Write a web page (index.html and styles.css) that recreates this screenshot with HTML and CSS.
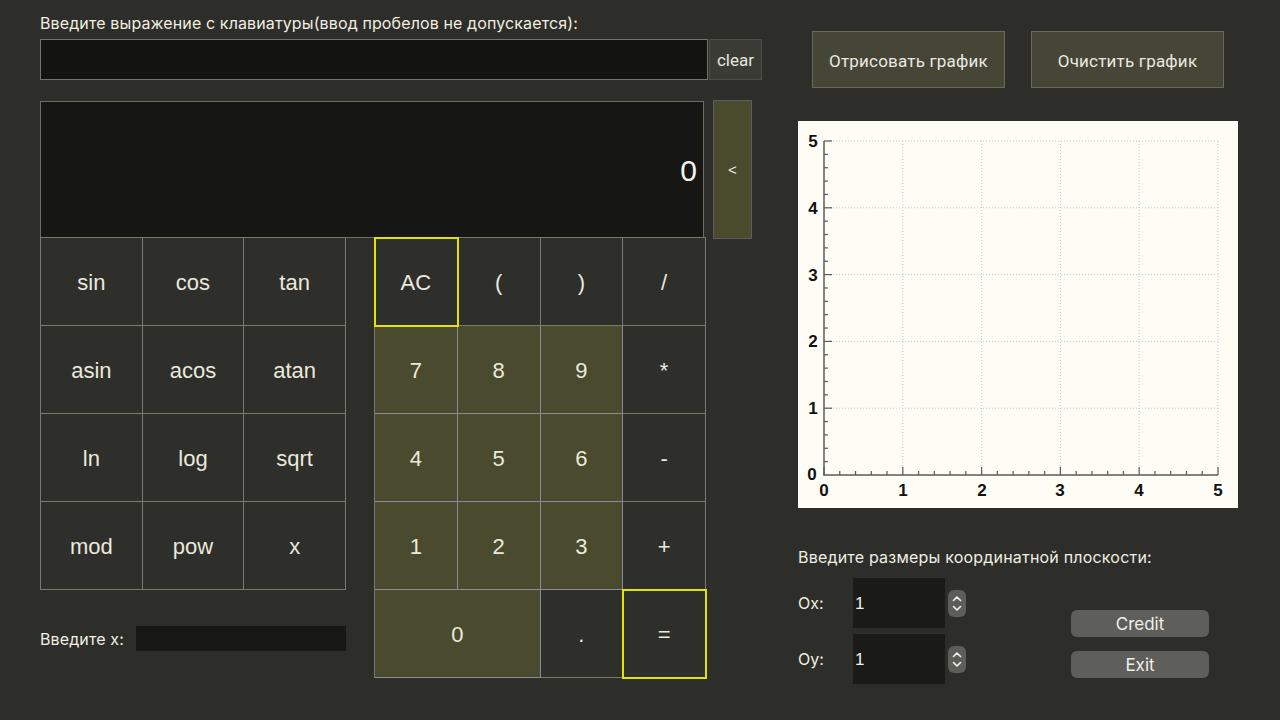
FILE: index.html
```html
<!DOCTYPE html>
<html lang="ru">
<head>
<meta charset="utf-8">
<title>Calculator</title>
<link rel="stylesheet" href="styles.css">
</head>
<body>
<div class="app">
  <div class="left">
    <div class="prompt">Введите выражение с клавиатуры(ввод пробелов не допускается):</div>
    <div class="expr-row">
      <div class="expr-input"></div>
      <button class="clear">clear</button>
    </div>
    <div class="screen-row">
      <div class="screen">0</div>
      <button class="back">&lt;</button>
    </div>
    <div class="keys">
      <div class="fn-col">
        <div class="fn-grid">
          <button class="key">sin</button>
          <button class="key">cos</button>
          <button class="key">tan</button>
          <button class="key">asin</button>
          <button class="key">acos</button>
          <button class="key">atan</button>
          <button class="key">ln</button>
          <button class="key">log</button>
          <button class="key">sqrt</button>
          <button class="key">mod</button>
          <button class="key">pow</button>
          <button class="key">x</button>
        </div>
        <div class="xrow">
          <span class="xlabel">Введите x:</span>
          <div class="xinput"></div>
        </div>
      </div>
      <div class="num-grid">
        <button class="key hl">AC</button>
        <button class="key">(</button>
        <button class="key">)</button>
        <button class="key">/</button>
        <button class="key num">7</button>
        <button class="key num">8</button>
        <button class="key num">9</button>
        <button class="key">*</button>
        <button class="key num">4</button>
        <button class="key num">5</button>
        <button class="key num">6</button>
        <button class="key">-</button>
        <button class="key num">1</button>
        <button class="key num">2</button>
        <button class="key num">3</button>
        <button class="key">+</button>
        <button class="key num wide">0</button>
        <button class="key">.</button>
        <button class="key hl">=</button>
      </div>
    </div>
  </div>

  <div class="right">
    <div class="graph-buttons">
      <button class="gbtn">Отрисовать график</button>
      <button class="gbtn">Очистить график</button>
    </div>
    <div class="graph">
      <svg width="440" height="387" viewBox="0 0 440 387" xmlns="http://www.w3.org/2000/svg">
        <g stroke="#c6c6dc" stroke-width="1" stroke-dasharray="1 2" fill="none">
          <line x1="26" y1="20" x2="420" y2="20"/>
          <line x1="26" y1="86.8" x2="420" y2="86.8"/>
          <line x1="26" y1="153.6" x2="420" y2="153.6"/>
          <line x1="26" y1="220.4" x2="420" y2="220.4"/>
          <line x1="26" y1="287.2" x2="420" y2="287.2"/>
          <line x1="104.8" y1="20" x2="104.8" y2="354"/>
          <line x1="183.6" y1="20" x2="183.6" y2="354"/>
          <line x1="262.4" y1="20" x2="262.4" y2="354"/>
          <line x1="341.2" y1="20" x2="341.2" y2="354"/>
          <line x1="420" y1="20" x2="420" y2="354"/>
        </g>
        <g stroke="#5a5a5a" stroke-width="1.5" fill="none">
          <line x1="26" y1="20" x2="26" y2="354.5"/>
          <line x1="25.5" y1="354" x2="420" y2="354"/>
        </g>
        <g stroke="#5a5a5a" stroke-width="1.2">
          <line x1="26" y1="354" x2="26" y2="346"/>
          <line x1="41.76" y1="354" x2="41.76" y2="350"/>
          <line x1="57.52" y1="354" x2="57.52" y2="350"/>
          <line x1="73.28" y1="354" x2="73.28" y2="350"/>
          <line x1="89.04" y1="354" x2="89.04" y2="350"/>
          <line x1="104.8" y1="354" x2="104.8" y2="346"/>
          <line x1="120.56" y1="354" x2="120.56" y2="350"/>
          <line x1="136.32" y1="354" x2="136.32" y2="350"/>
          <line x1="152.08" y1="354" x2="152.08" y2="350"/>
          <line x1="167.84" y1="354" x2="167.84" y2="350"/>
          <line x1="183.6" y1="354" x2="183.6" y2="346"/>
          <line x1="199.36" y1="354" x2="199.36" y2="350"/>
          <line x1="215.12" y1="354" x2="215.12" y2="350"/>
          <line x1="230.88" y1="354" x2="230.88" y2="350"/>
          <line x1="246.64" y1="354" x2="246.64" y2="350"/>
          <line x1="262.4" y1="354" x2="262.4" y2="346"/>
          <line x1="278.16" y1="354" x2="278.16" y2="350"/>
          <line x1="293.92" y1="354" x2="293.92" y2="350"/>
          <line x1="309.68" y1="354" x2="309.68" y2="350"/>
          <line x1="325.44" y1="354" x2="325.44" y2="350"/>
          <line x1="341.2" y1="354" x2="341.2" y2="346"/>
          <line x1="356.96" y1="354" x2="356.96" y2="350"/>
          <line x1="372.72" y1="354" x2="372.72" y2="350"/>
          <line x1="388.48" y1="354" x2="388.48" y2="350"/>
          <line x1="404.24" y1="354" x2="404.24" y2="350"/>
          <line x1="420" y1="354" x2="420" y2="346"/>
        </g>
        <g stroke="#5a5a5a" stroke-width="1.2">
          <line x1="26" y1="20" x2="34" y2="20"/>
          <line x1="26" y1="33.36" x2="30" y2="33.36"/>
          <line x1="26" y1="46.72" x2="30" y2="46.72"/>
          <line x1="26" y1="60.08" x2="30" y2="60.08"/>
          <line x1="26" y1="73.44" x2="30" y2="73.44"/>
          <line x1="26" y1="86.8" x2="34" y2="86.8"/>
          <line x1="26" y1="100.16" x2="30" y2="100.16"/>
          <line x1="26" y1="113.52" x2="30" y2="113.52"/>
          <line x1="26" y1="126.88" x2="30" y2="126.88"/>
          <line x1="26" y1="140.24" x2="30" y2="140.24"/>
          <line x1="26" y1="153.6" x2="34" y2="153.6"/>
          <line x1="26" y1="166.96" x2="30" y2="166.96"/>
          <line x1="26" y1="180.32" x2="30" y2="180.32"/>
          <line x1="26" y1="193.68" x2="30" y2="193.68"/>
          <line x1="26" y1="207.04" x2="30" y2="207.04"/>
          <line x1="26" y1="220.4" x2="34" y2="220.4"/>
          <line x1="26" y1="233.76" x2="30" y2="233.76"/>
          <line x1="26" y1="247.12" x2="30" y2="247.12"/>
          <line x1="26" y1="260.48" x2="30" y2="260.48"/>
          <line x1="26" y1="273.84" x2="30" y2="273.84"/>
          <line x1="26" y1="287.2" x2="34" y2="287.2"/>
          <line x1="26" y1="300.56" x2="30" y2="300.56"/>
          <line x1="26" y1="313.92" x2="30" y2="313.92"/>
          <line x1="26" y1="327.28" x2="30" y2="327.28"/>
          <line x1="26" y1="340.64" x2="30" y2="340.64"/>
        </g>
        <g class="ticklabel" text-anchor="middle">
          <text x="15" y="26">5</text>
          <text x="15" y="93">4</text>
          <text x="15" y="160">3</text>
          <text x="15" y="226">2</text>
          <text x="15" y="293">1</text>
          <text x="14" y="359">0</text>
          <text x="26" y="375">0</text>
          <text x="105" y="375">1</text>
          <text x="184" y="375">2</text>
          <text x="262" y="375">3</text>
          <text x="341" y="375">4</text>
          <text x="420" y="375">5</text>
        </g>
      </svg>
    </div>
    <div class="coord-label">Введите размеры координатной плоскости:</div>
    <div class="bottom">
      <div class="spins">
        <div class="spin-row">
          <span class="axis-label">Ox:</span>
          <div class="spinbox">1</div>
          <div class="stepper">
            <svg width="18" height="27" viewBox="0 0 18 27" xmlns="http://www.w3.org/2000/svg">
              <path d="M5.5 10.5 L9 7 L12.5 10.5" stroke="#f2f2f2" stroke-width="1.6" fill="none" stroke-linecap="round" stroke-linejoin="round"/>
              <path d="M5.5 16.5 L9 20 L12.5 16.5" stroke="#f2f2f2" stroke-width="1.6" fill="none" stroke-linecap="round" stroke-linejoin="round"/>
            </svg>
          </div>
        </div>
        <div class="spin-row">
          <span class="axis-label">Oy:</span>
          <div class="spinbox">1</div>
          <div class="stepper">
            <svg width="18" height="27" viewBox="0 0 18 27" xmlns="http://www.w3.org/2000/svg">
              <path d="M5.5 10.5 L9 7 L12.5 10.5" stroke="#f2f2f2" stroke-width="1.6" fill="none" stroke-linecap="round" stroke-linejoin="round"/>
              <path d="M5.5 16.5 L9 20 L12.5 16.5" stroke="#f2f2f2" stroke-width="1.6" fill="none" stroke-linecap="round" stroke-linejoin="round"/>
            </svg>
          </div>
        </div>
      </div>
      <div class="actions">
        <button class="pill">Credit</button>
        <button class="pill">Exit</button>
      </div>
    </div>
  </div>
</div>
</body>
</html>
```

FILE: styles.css
```css
* { box-sizing: border-box; }

html, body {
  margin: 0;
  padding: 0;
  width: 1280px;
  height: 720px;
  overflow: hidden;
  background: #2d2d2a;
  font-family: Inter, "Liberation Sans", sans-serif;
  color: #f0efe0;
}

button {
  font: inherit;
  color: inherit;
  margin: 0;
  padding: 0;
  cursor: pointer;
}

.app {
  display: flex;
  align-items: flex-start;
}

/* ---------- left column ---------- */
.left {
  width: 762px;
  padding-left: 40px;
}

.prompt {
  margin-top: 13px;
  font-size: 16px;
  letter-spacing: 0.12px;
  line-height: 20px;
  height: 20px;
  white-space: nowrap;
}

.expr-row {
  display: flex;
  margin-top: 6px;
  height: 41px;
}

.expr-input {
  width: 668px;
  height: 41px;
  background: #131311;
  border: 1px solid #75746a;
}

.clear {
  width: 53px;
  height: 41px;
  margin-left: 1px;
  background: #3b3b35;
  border: 1px solid #4e4e47;
  font-family: Roboto, "Liberation Sans", sans-serif;
  font-size: 17px;
  color: #e6e6de;
}

.screen-row {
  display: flex;
  align-items: flex-start;
  margin-top: 20px;
  height: 138px;
}

.screen {
  width: 664px;
  height: 137px;
  margin-top: 1px;
  background: #161614;
  border: 1px solid #6f6e5c;
  display: flex;
  align-items: center;
  justify-content: flex-end;
  padding-right: 6px;
  padding-top: 3px;
  font-family: "Liberation Sans", Arial, sans-serif;
  font-size: 30px;
  color: #f4f4ee;
}

.back {
  width: 39px;
  height: 139px;
  margin-left: 9px;
  background: #4a4a2d;
  border: 1px solid #5c5c68;
  font-family: "Liberation Sans", sans-serif;
  font-size: 15px;
  color: #e8e8e0;
}

.keys {
  display: flex;
  align-items: flex-start;
  margin-top: -1px;
}

.fn-col {
  width: 306px;
}

.fn-grid {
  display: grid;
  grid-template-columns: repeat(3, 1fr);
  grid-auto-rows: 88px;
  width: 306px;
  border-top: 1px solid #787760;
  border-left: 1px solid #77777a;
}

.num-grid {
  display: grid;
  grid-template-columns: repeat(4, 1fr);
  grid-auto-rows: 88px;
  width: 332px;
  margin-left: 28px;
  border-top: 1px solid #787760;
  border-left: 1px solid #77777a;
}

.key {
  position: relative;
  background: #2e2e2b;
  border: none;
  border-right: 1px solid #7a7a72;
  border-bottom: 1px solid #7c7b64;
  padding-top: 3px;
  font-family: "Liberation Sans", Arial, sans-serif;
  font-size: 22px;
  color: #ebe9dc;
}

.key.num {
  background: #4a4a2e;
  border-right-color: #8a8a9c;
  border-bottom-color: #8a8a9a;
}

.key.wide {
  grid-column: span 2;
}

.key.hl {
  outline: 2px solid #e3e300;
  outline-offset: -1px;
  z-index: 1;
}

.xrow {
  display: flex;
  align-items: center;
  margin-top: 36px;
  height: 25px;
}

.xlabel {
  width: 97px;
  font-size: 16px;
  letter-spacing: 0.12px;
  white-space: nowrap;
}

.xinput {
  width: 211px;
  height: 25px;
  background: #171715;
}

/* ---------- right column ---------- */
.right {
  width: 440px;
  margin-left: 36px;
}

.graph-buttons {
  display: flex;
  gap: 26px;
  margin-top: 31px;
  padding-left: 14px;
}

.gbtn {
  width: 193px;
  height: 57px;
  background: #464636;
  border: 1px solid #6a6a58;
  padding-top: 2px;
  font-family: Roboto, "Liberation Sans", sans-serif;
  font-size: 17px;
  letter-spacing: 0.2px;
  color: #e8e8e2;
}

.graph {
  margin-top: 33px;
  width: 440px;
  height: 387px;
  background: #fdfdf6;
}

.graph svg {
  display: block;
}

.ticklabel text {
  font-family: "Liberation Sans", Arial, sans-serif;
  font-size: 17px;
  font-weight: 700;
  fill: #111;
}

.coord-label {
  margin-top: 39px;
  font-size: 16px;
  letter-spacing: 0.2px;
  line-height: 20px;
  white-space: nowrap;
}

.bottom {
  display: flex;
  align-items: flex-start;
  margin-top: 11px;
}

.spins {
  display: flex;
  flex-direction: column;
  gap: 6px;
}

.spin-row {
  display: flex;
  align-items: center;
  height: 50px;
}

.axis-label {
  width: 55px;
  font-size: 16px;
}

.spinbox {
  width: 92px;
  height: 50px;
  background: #1a1a17;
  display: flex;
  align-items: center;
  padding-left: 2px;
  padding-top: 2px;
  font-family: "Liberation Sans", Arial, sans-serif;
  font-size: 17px;
  color: #f2f2ec;
}

.stepper {
  width: 18px;
  height: 27px;
  margin-left: 3px;
  background: #5e5e59;
  border-radius: 6px;
}

.stepper svg {
  display: block;
}

.actions {
  display: flex;
  flex-direction: column;
  gap: 14px;
  margin-left: 105px;
  margin-top: 32px;
}

.pill {
  width: 138px;
  height: 27px;
  background: #5e5e5a;
  border: none;
  border-radius: 6px;
  font-family: Inter, "Liberation Sans", sans-serif;
  font-size: 17px;
  color: #f0f0ea;
}
```
